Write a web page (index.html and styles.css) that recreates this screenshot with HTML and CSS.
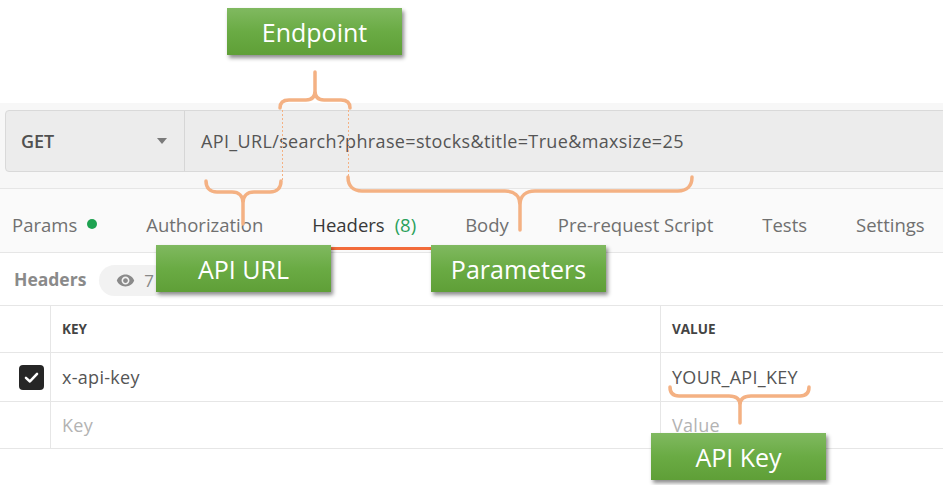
FILE: index.html
```html
<!DOCTYPE html>
<html>
<head>
<meta charset="utf-8">
<link rel="stylesheet" href="styles.css">
</head>
<body>
<div class="page">
  <div class="topspace"></div>
  <section class="request">
    <div class="urlbar">
      <div class="method"><span class="method-name">GET</span><span class="caret"></span></div>
      <div class="url">API_URL/search?phrase=stocks&amp;title=True&amp;maxsize=25</div>
    </div>
  </section>
  <nav class="tabs">
    <div class="tab first">Params<span class="dot"></span></div>
    <div class="tab">Authorization</div>
    <div class="tab active">Headers<span class="count">(8)</span></div>
    <div class="tab">Body</div>
    <div class="tab">Pre-request Script</div>
    <div class="tab">Tests</div>
    <div class="tab">Settings</div>
  </nav>
  <div class="subhead">
    <span class="subtitle">Headers</span>
    <span class="pill">
      <svg class="eye" viewBox="0 0 24 24" width="19" height="19"><path fill="#8a8a8a" d="M12 4.5C7 4.5 2.730 7.610 1 12c1.730 4.390 6 7.5 11 7.5s9.270-3.110 11-7.5c-1.730-4.390-6-7.5-11-7.5zM12 17c-2.760 0-5-2.240-5-5s2.240-5 5-5 5 2.240 5 5-2.240 5-5 5zm0-8c-1.660 0-3 1.340-3 3s1.340 3 3 3 3-1.340 3-3-1.340-3-3-3z"/></svg>
      <span class="pill-num">7</span>
    </span>
  </div>
  <div class="table">
    <div class="cell c1 head"></div>
    <div class="cell c2 head">KEY</div>
    <div class="cell c3 head">VALUE</div>
    <div class="cell c1 row1"><span class="checkbox"><svg viewBox="0 0 24 24" width="19" height="19"><polyline points="5,12.5 10,17 19,7.5" fill="none" stroke="#fff" stroke-width="3.2" stroke-linecap="round" stroke-linejoin="round"/></svg></span></div>
    <div class="cell c2 row1">x-api-key</div>
    <div class="cell c3 row1">YOUR_API_KEY</div>
    <div class="cell c1 row2"></div>
    <div class="cell c2 row2 ph">Key</div>
    <div class="cell c3 row2 ph">Value</div>
  </div>

  <svg class="annot" width="943" height="485" viewBox="0 0 943 485">
    <g fill="none" stroke="#f4b183" stroke-width="3.5" stroke-linecap="round">
      <path d="M280 108 C280 103 283 100 289 100 L306 100 C312 100 315 97 315 91 L315 72 M315 91 C315 97 318 100 324 100 L341 100 C347 100 350 103 350 108"/>
      <path d="M206 181 C206 188 210 192 217 192 L232 192 C239 192 243 196 243 203 L243 224 M243 203 C243 196 247 192 254 192 L270 192 C277 192 281 188 281 181"/>
      <path d="M348 177 C348 186 353 191 362 191 L505 191 C514 191 520 196 520 205 L520 230 M520 205 C520 196 526 191 535 191 L678 191 C687 191 692 186 692 177"/>
      <path d="M670 387 C670 393 673 396 679 396 L729 396 C736 396 740 399 740 405 L740 423 M740 405 C740 399 744 396 751 396 L800 396 C806 396 809 393 809 387"/>
    </g>
    <g stroke="#f4b183" stroke-width="1" stroke-dasharray="2 2">
      <line x1="282.5" y1="110" x2="282.5" y2="180"/>
      <line x1="348.5" y1="110" x2="348.5" y2="177"/>
    </g>
  </svg>

  <div class="label l-endpoint">Endpoint</div>
  <div class="label l-apiurl">API URL</div>
  <div class="label l-params">Parameters</div>
  <div class="label l-apikey">API Key</div>
</div>
</body>
</html>
```
FILE: styles.css
```css
html, body {
  margin: 0;
  padding: 0;
  overflow: hidden;
  background: #ffffff;
}
.page {
  position: relative;
  width: 943px;
  height: 485px;
  overflow: hidden;
  font-family: "Open Sans", "Noto Sans", sans-serif;
  color: #555;
}
.topspace {
  height: 103px;
}
.request {
  background: #f7f7f7;
  padding: 7px 0 16px 5px;
  border-bottom: 1px solid #e6e6e6;
}
.urlbar {
  display: flex;
  height: 62px;
  box-sizing: border-box;
  border: 1px solid #d9d9d9;
  border-radius: 4px;
  background: #ececec;
  margin-right: -10px;
}
.method {
  width: 179px;
  box-sizing: border-box;
  border-right: 1px solid #d6d6d6;
  display: flex;
  align-items: center;
  justify-content: space-between;
  padding: 0 17px 0 15px;
}
.method-name {
  font-size: 18px;
  font-weight: 600;
  color: #505050;
}
.caret {
  width: 0;
  height: 0;
  border-left: 5px solid transparent;
  border-right: 5px solid transparent;
  border-top: 6px solid #7a7a7a;
}
.url {
  display: flex;
  align-items: center;
  padding-left: 16px;
  font-size: 18px;
  letter-spacing: 0.35px;
  color: #555;
  white-space: nowrap;
}
.tabs {
  display: flex;
  gap: 17px;
  height: 64px;
  box-sizing: border-box;
  background: #fafafa;
  border-bottom: 1px solid #e6e6e6;
}
.tab {
  display: flex;
  align-items: center;
  padding: 12px 16px 0;
  margin-bottom: 2px;
  border-bottom: 3px solid transparent;
  font-size: 18.5px;
  color: #707070;
  white-space: nowrap;
}
.tab.first {
  margin-left: -4px;
}
.tab.active {
  color: #383838;
  border-bottom-color: #f26b3a;
}
.dot {
  width: 10px;
  height: 10px;
  border-radius: 50%;
  background: #1ea251;
  margin-left: 10px;
}
.count {
  color: #2aa15a;
  margin-left: 10px;
}
.subhead {
  height: 52px;
  display: flex;
  align-items: center;
  gap: 13px;
  padding-left: 14px;
}
.subtitle {
  font-size: 17.5px;
  font-weight: 700;
  color: #8a8a8a;
}
.pill {
  height: 31px;
  display: flex;
  align-items: center;
  gap: 9px;
  padding: 0 14px 0 17px;
  border-radius: 16px;
  background: #f2f2f2;
  font-size: 17px;
  color: #888;
  margin-top: 3px;
}
.table {
  display: grid;
  grid-template-columns: 51px 610px 1fr;
  border-top: 1px solid #e6e6e6;
}
.cell {
  display: flex;
  align-items: center;
  box-sizing: border-box;
  border-bottom: 1px solid #e6e6e6;
  padding-left: 11px;
  font-size: 18px;
  letter-spacing: 0.3px;
  color: #555;
}
.c1, .c2 {
  border-right: 1px solid #e6e6e6;
}
.c1 {
  padding-left: 0;
  justify-content: flex-end;
  padding-right: 6px;
}
.head {
  height: 47px;
  font-size: 13.5px;
  letter-spacing: 0;
  font-weight: 700;
  color: #444;
}
.row1 {
  height: 49px;
}
.row2 {
  height: 47px;
}
.ph {
  color: #b3b3b3;
}
.checkbox {
  width: 25px;
  height: 25px;
  border-radius: 4px;
  background: #262626;
  display: flex;
  align-items: center;
  justify-content: center;
}
.annot {
  position: absolute;
  top: 0;
  left: 0;
  pointer-events: none;
}
.label {
  position: absolute;
  width: 175px;
  height: 47px;
  display: flex;
  align-items: center;
  justify-content: center;
  color: #ffffff;
  font-size: 25px;
  background: linear-gradient(to bottom, #80b960 0%, #6aab44 50%, #5f9f37 100%);
  box-shadow: 2px 3px 4px rgba(0, 0, 0, 0.45);
}
.l-endpoint { left: 227px; top: 8px; }
.l-apiurl { left: 156px; top: 245px; }
.l-params { left: 431px; top: 245px; }
.l-apikey { left: 651px; top: 433px; }
```
